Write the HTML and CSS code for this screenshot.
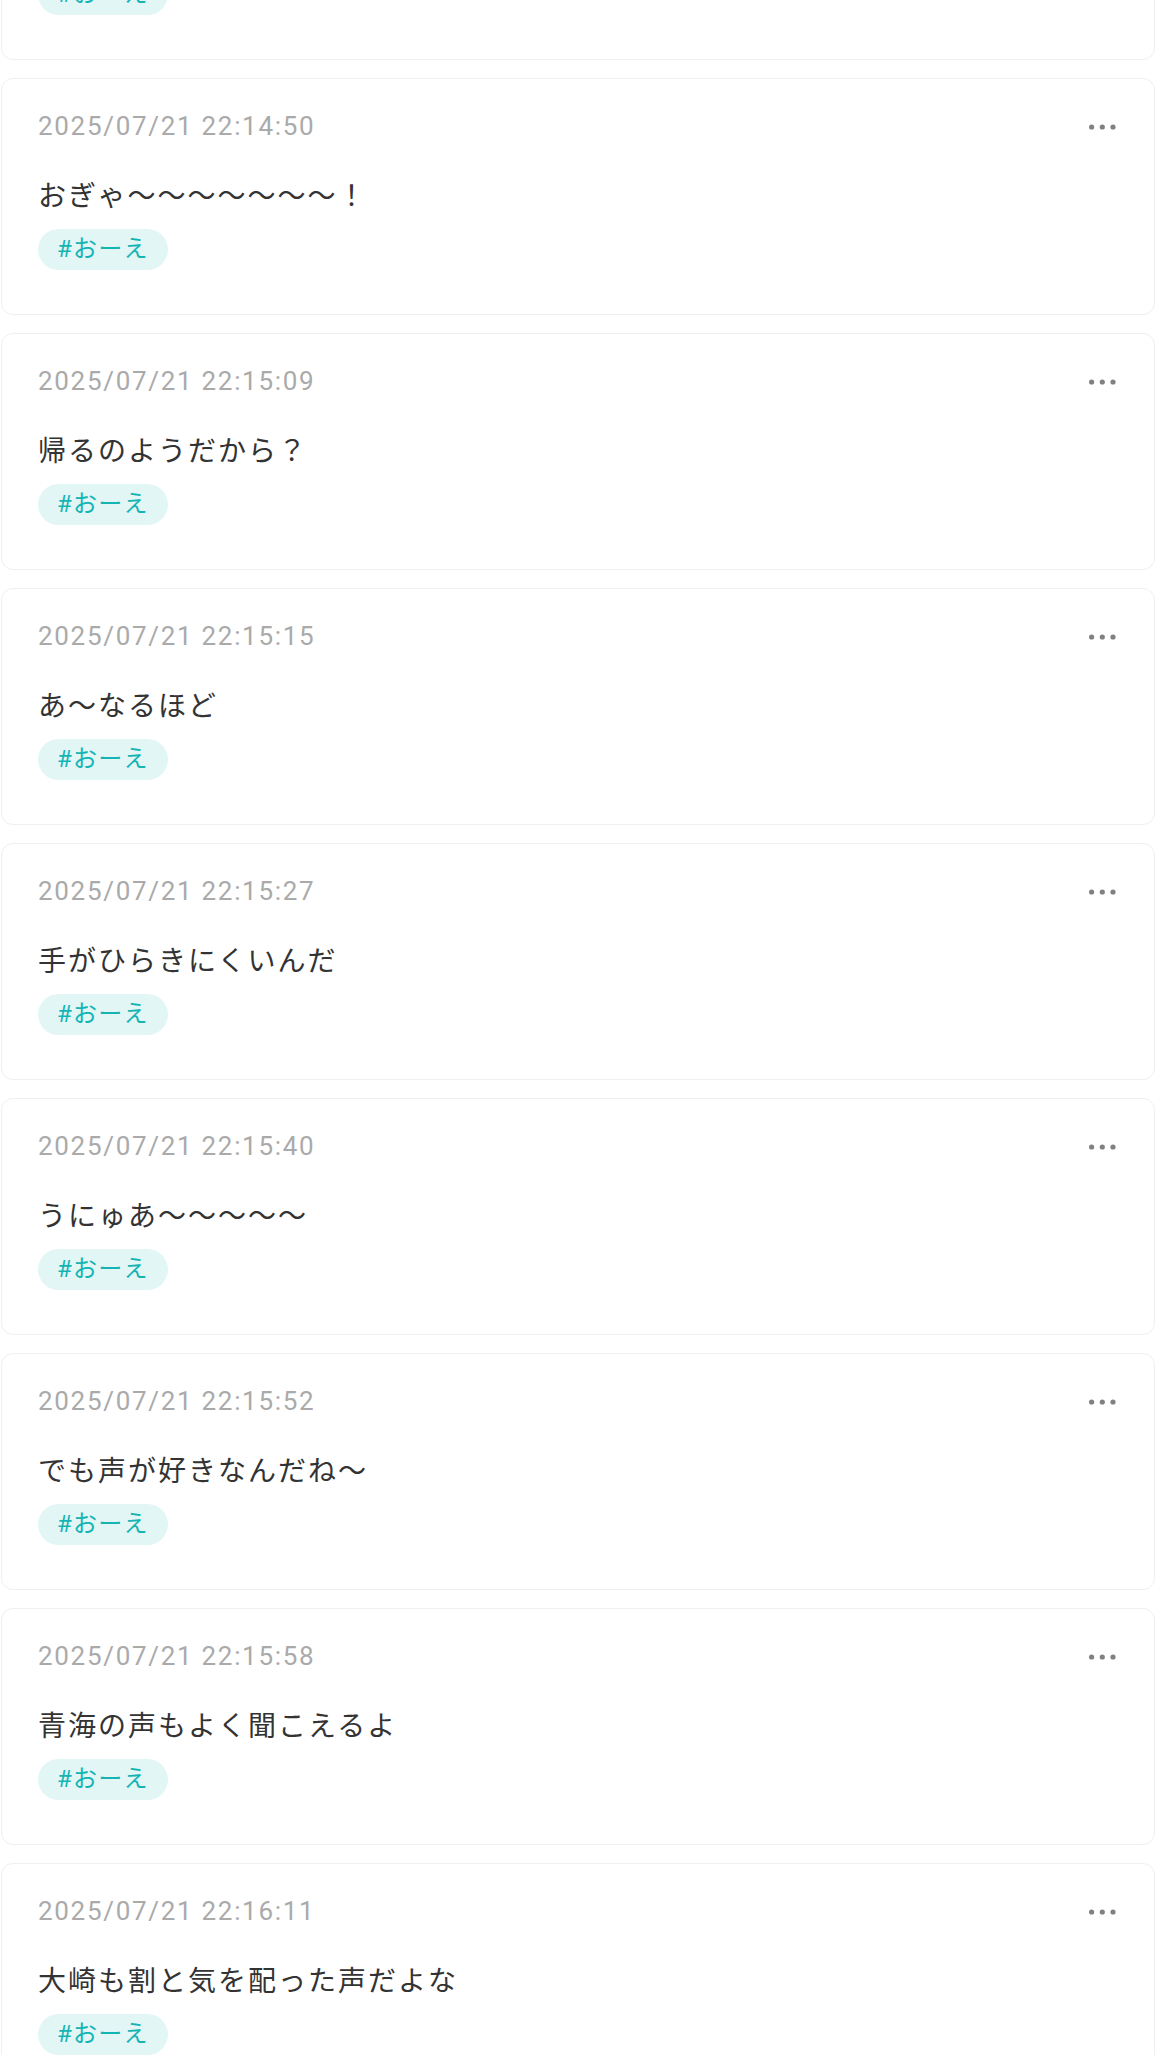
FILE: index.html
```html
<!DOCTYPE html>
<html lang="ja">
<head>
  <meta charset="UTF-8">
  <title>つぶやき</title>
  <link rel="stylesheet" href="styles.css">
</head>
<body>

<div class="tl-feed">

  <div class="tl-card">
    <div class="tl-head">
      <span class="tl-date">2025/07/21 22:14:38</span>
      <svg class="tl-more" width="27" height="6" viewBox="0 0 27 6"><circle cx="2.6" cy="3" r="2.6"/><circle cx="13.3" cy="3" r="2.6"/><circle cx="24" cy="3" r="2.6"/></svg>
    </div>
    <p class="tl-text">おーい</p>
    <div class="tl-tags"><span class="tl-tag">#おーえ</span></div>
  </div>

  <div class="tl-card">
    <div class="tl-head">
      <span class="tl-date">2025/07/21 22:14:50</span>
      <svg class="tl-more" width="27" height="6" viewBox="0 0 27 6"><circle cx="2.6" cy="3" r="2.6"/><circle cx="13.3" cy="3" r="2.6"/><circle cx="24" cy="3" r="2.6"/></svg>
    </div>
    <p class="tl-text">おぎゃ〜〜〜〜〜〜〜！</p>
    <div class="tl-tags"><span class="tl-tag">#おーえ</span></div>
  </div>

  <div class="tl-card">
    <div class="tl-head">
      <span class="tl-date">2025/07/21 22:15:09</span>
      <svg class="tl-more" width="27" height="6" viewBox="0 0 27 6"><circle cx="2.6" cy="3" r="2.6"/><circle cx="13.3" cy="3" r="2.6"/><circle cx="24" cy="3" r="2.6"/></svg>
    </div>
    <p class="tl-text">帰るのようだから？</p>
    <div class="tl-tags"><span class="tl-tag">#おーえ</span></div>
  </div>

  <div class="tl-card">
    <div class="tl-head">
      <span class="tl-date">2025/07/21 22:15:15</span>
      <svg class="tl-more" width="27" height="6" viewBox="0 0 27 6"><circle cx="2.6" cy="3" r="2.6"/><circle cx="13.3" cy="3" r="2.6"/><circle cx="24" cy="3" r="2.6"/></svg>
    </div>
    <p class="tl-text">あ〜なるほど</p>
    <div class="tl-tags"><span class="tl-tag">#おーえ</span></div>
  </div>

  <div class="tl-card">
    <div class="tl-head">
      <span class="tl-date">2025/07/21 22:15:27</span>
      <svg class="tl-more" width="27" height="6" viewBox="0 0 27 6"><circle cx="2.6" cy="3" r="2.6"/><circle cx="13.3" cy="3" r="2.6"/><circle cx="24" cy="3" r="2.6"/></svg>
    </div>
    <p class="tl-text">手がひらきにくいんだ</p>
    <div class="tl-tags"><span class="tl-tag">#おーえ</span></div>
  </div>

  <div class="tl-card">
    <div class="tl-head">
      <span class="tl-date">2025/07/21 22:15:40</span>
      <svg class="tl-more" width="27" height="6" viewBox="0 0 27 6"><circle cx="2.6" cy="3" r="2.6"/><circle cx="13.3" cy="3" r="2.6"/><circle cx="24" cy="3" r="2.6"/></svg>
    </div>
    <p class="tl-text">うにゅあ〜〜〜〜〜</p>
    <div class="tl-tags"><span class="tl-tag">#おーえ</span></div>
  </div>

  <div class="tl-card">
    <div class="tl-head">
      <span class="tl-date">2025/07/21 22:15:52</span>
      <svg class="tl-more" width="27" height="6" viewBox="0 0 27 6"><circle cx="2.6" cy="3" r="2.6"/><circle cx="13.3" cy="3" r="2.6"/><circle cx="24" cy="3" r="2.6"/></svg>
    </div>
    <p class="tl-text">でも声が好きなんだね〜</p>
    <div class="tl-tags"><span class="tl-tag">#おーえ</span></div>
  </div>

  <div class="tl-card">
    <div class="tl-head">
      <span class="tl-date">2025/07/21 22:15:58</span>
      <svg class="tl-more" width="27" height="6" viewBox="0 0 27 6"><circle cx="2.6" cy="3" r="2.6"/><circle cx="13.3" cy="3" r="2.6"/><circle cx="24" cy="3" r="2.6"/></svg>
    </div>
    <p class="tl-text">青海の声もよく聞こえるよ</p>
    <div class="tl-tags"><span class="tl-tag">#おーえ</span></div>
  </div>

  <div class="tl-card">
    <div class="tl-head">
      <span class="tl-date">2025/07/21 22:16:11</span>
      <svg class="tl-more" width="27" height="6" viewBox="0 0 27 6"><circle cx="2.6" cy="3" r="2.6"/><circle cx="13.3" cy="3" r="2.6"/><circle cx="24" cy="3" r="2.6"/></svg>
    </div>
    <p class="tl-text">大崎も割と気を配った声だよな</p>
    <div class="tl-tags"><span class="tl-tag">#おーえ</span></div>
  </div>

</div>

</body>
</html>
```

FILE: styles.css
```css
body {
  margin: 0;
  background-color: #ffffff;
  font-family: Roboto, "Noto Sans CJK JP", sans-serif;
  color: #333333;
  overflow: hidden;
}

/* the list is scrolled: first card only partly visible */
.tl-feed {
  margin-top: -177px;
  padding: 0 1px;
}

.tl-card {
  background-color: #ffffff;
  border: 1px solid #efefef;
  border-radius: 12px;
  padding: 28px 38px 44px 36px;
  margin-bottom: 18px;
}

.tl-head {
  display: flex;
  justify-content: space-between;
  align-items: center;
}

.tl-date {
  font-size: 26px;
  line-height: 39px;
  letter-spacing: 1.7px;
  color: #aaaaaa;
}

.tl-more {
  fill: #808080;
}

.tl-text {
  margin: 26px 0 12px;
  font-family: "Noto Sans CJK JP", sans-serif;
  font-size: 28px;
  line-height: 45px;
  letter-spacing: 2px;
}

.tl-tags {
  display: flex;
  gap: 10px;
}

.tl-tag {
  font-size: 24px;
  line-height: 41px;
  padding: 0 19px;
  border-radius: 21px;
  background-color: #e3f6f6;
  color: #14b4b4;
  letter-spacing: 0.05em;
}
```
